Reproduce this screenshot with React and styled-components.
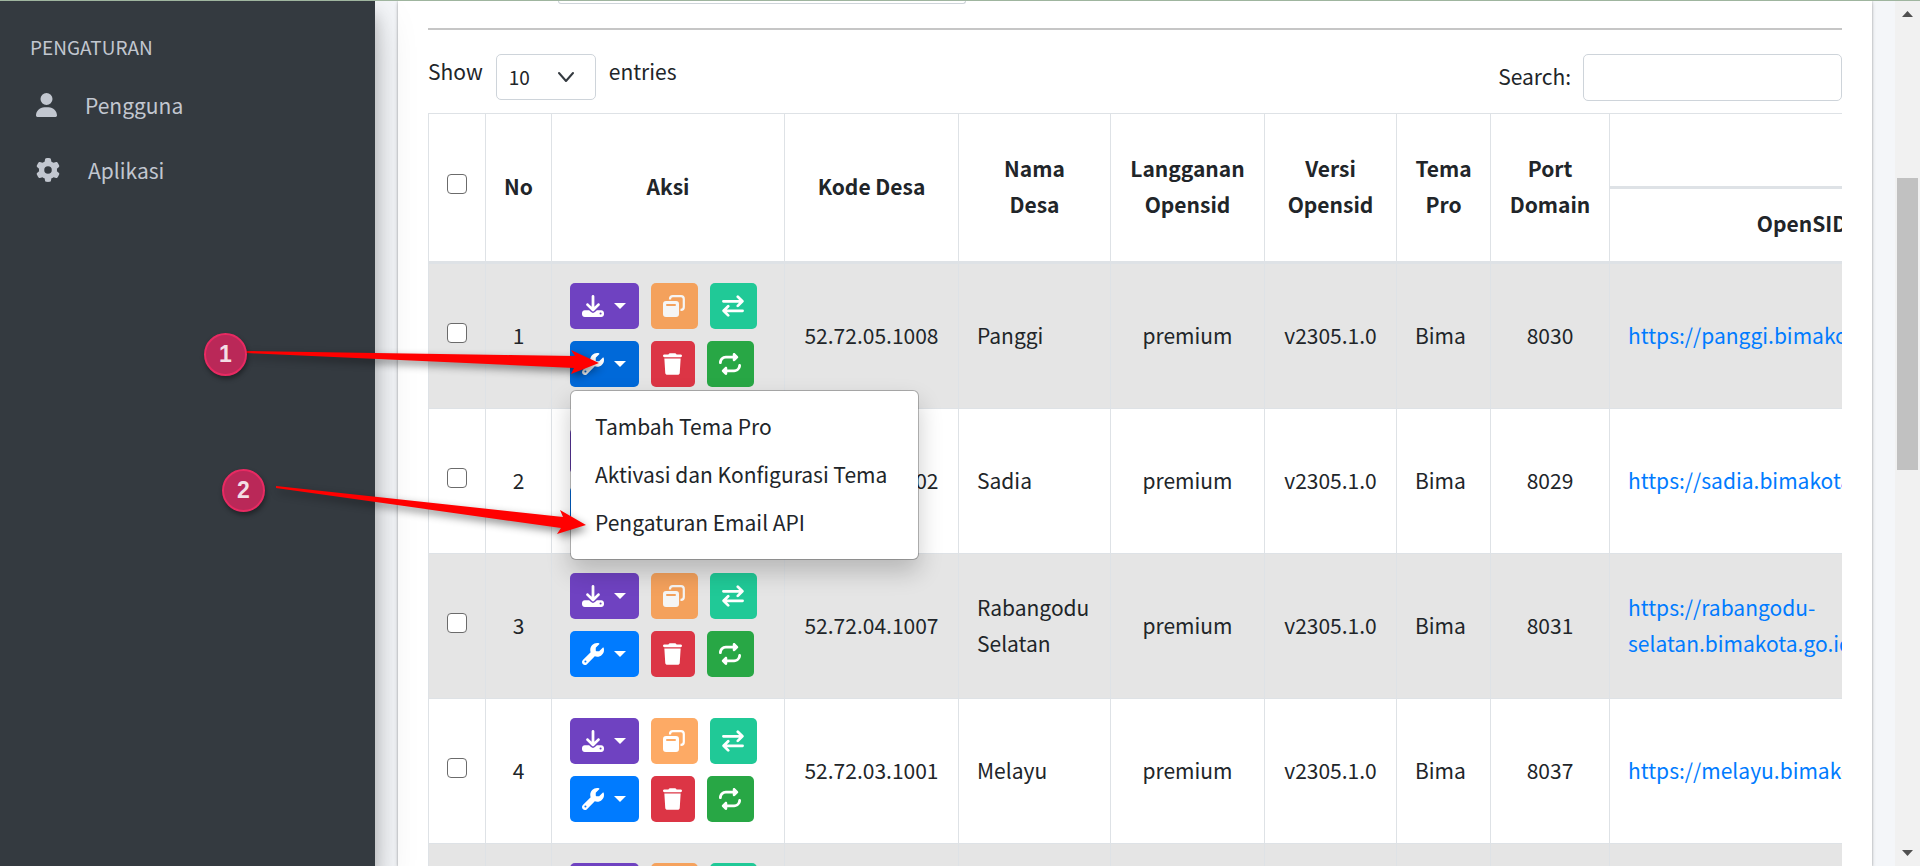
// halaman daftar pelanggan dengan menu pengaturan tema yang terbuka

import React from "react";
import styled, { createGlobalStyle } from "styled-components";
import { FaDownload, FaGear, FaRepeat, FaTrash, FaUser, FaWrench } from "react-icons/fa6";

const GlobalStyle = createGlobalStyle`
  * {
    box-sizing: border-box;
  }

  body {
    margin: 0;
    overflow: hidden;
    background: #f4f6f9;
    color: #212529;
    font-family: "Noto Sans CJK SC", "Open Sans", sans-serif;
    font-size: 21px;
    line-height: 36px;
  }

  button, input, select {
    font-family: inherit;
    color: inherit;
  }
`;

const Page = styled.div`
  position: relative;
  display: flex;
  height: 100vh;
  overflow: hidden;
  border-top: 1px solid #9fb59f;
`;

const Sidebar = styled.aside`
  position: relative;
  z-index: 1;
  flex: 0 0 375px;
  padding: 28px 30px;
  background: #343a40;
  color: #c2c7d0;
  box-shadow: 0 20px 40px rgba(0, 0, 0, 0.18), 0 14px 16px rgba(0, 0, 0, 0.22);
`;

const SidebarTitle = styled.h2`
  margin: 0 0 8px;
  font-size: 19px;
  font-weight: 400;
`;

const SidebarLink = styled.a`
  display: flex;
  align-items: center;
  gap: 28px;
  height: 65px;
  padding: 0 0 2px 6px;
  color: inherit;
  text-decoration: none;

  svg {
    width: ${(props) => props.$iconWidth}px;
    height: 24px;
  }
`;

const Content = styled.main`
  flex: 1;
  min-width: 0;
  padding: 0 23px;
`;

const Card = styled.section`
  height: 100%;
  padding: 0 30px;
  background: #fff;
  box-shadow: 0 0 2px rgba(0, 0, 0, 0.25), 0 2px 4px rgba(0, 0, 0, 0.2);
`;

const FilterBar = styled.div`
  height: 27px;
  padding-left: 130px;
`;

const FilterEdge = styled.div`
  width: 408px;
  height: 3px;
  border: 1px solid #ced4da;
  border-top: 0;
  border-radius: 0 0 6px 6px;
`;

const Divider = styled.hr`
  height: 2px;
  margin: 0 0 24px;
  border: 0;
  background: #c6c6c6;
`;

const Toolbar = styled.div`
  display: flex;
  justify-content: space-between;
  margin-bottom: 12px;
`;

const LengthLabel = styled.label`
  display: flex;
  gap: 13px;
  line-height: 34px;
`;

const SelectBox = styled.span`
  position: relative;
  display: block;

  svg {
    position: absolute;
    top: 17px;
    right: 22px;
    pointer-events: none;
  }
`;

const LengthSelect = styled.select`
  width: 100px;
  height: 46px;
  padding: 0 12px 2px;
  appearance: none;
  border: 1px solid #ced4da;
  border-radius: 5px;
  background: #fff;
  font-size: 19px;
`;

const SearchLabel = styled.label`
  display: flex;
  align-items: center;
  gap: 12px;
`;

const SearchText = styled.span`
  padding-bottom: 4px;
`;

const SearchInput = styled.input`
  width: 259px;
  height: 47px;
  padding: 0 12px;
  border: 1px solid #ced4da;
  border-radius: 5px;
  background: #fff;
  font-size: 19px;
`;

const TableWrapper = styled.div`
  overflow: hidden;
`;

const Table = styled.table`
  width: 1567px;
  table-layout: fixed;
  border-collapse: separate;
  border-spacing: 0;
  border: 1px solid #dee2e6;
  border-width: 1px 0 0 1px;
`;

const HeadCell = styled.th`
  height: 75px;
  padding: 0 12px 4px;
  border-right: 1px solid #dee2e6;
  border-bottom: 3px solid #dee2e6;
  font-weight: 700;
  white-space: pre-line;
`;

const Row = styled.tr`
  background: ${(props) => (props.$striped ? "#e5e5e5" : "#fff")};
`;

const Cell = styled.td`
  height: 145px;
  padding: 0 18px 2px;
  border-right: 1px solid #dee2e6;
  border-bottom: 1px solid #dee2e6;
  text-align: ${(props) => (props.$center ? "center" : "left")};
`;

const Checkbox = styled.input`
  display: block;
  width: 20px;
  height: 20px;
  margin: 0 auto 4px;
  appearance: none;
  border: 1px solid #6b6b6b;
  border-radius: 4px;
  background: #fff;
`;

const DomainLink = styled.a`
  color: #007bff;
  text-decoration: none;
`;

const Actions = styled.div`
  display: grid;
  gap: 12px;
`;

const ActionLine = styled.div`
  display: flex;
  gap: 12px;
`;

const ActionButton = styled.button`
  display: flex;
  align-items: center;
  gap: 10px;
  height: 46px;
  padding: 0 13px 0 12px;
  border: 0;
  border-radius: 5px;
  background: ${(props) => props.$color};
  color: #fff;

  svg {
    width: ${(props) => props.$iconWidth || 22}px;
    height: 22px;
  }

  &:disabled {
    opacity: 0.65;
  }
`;

const Caret = styled.span`
  border: 6px solid transparent;
  border-top-color: currentColor;
  border-bottom: 0;
`;

const Dropdown = styled.div`
  position: relative;
`;

const Menu = styled.div`
  position: absolute;
  z-index: 10;
  top: calc(100% + 3px);
  left: 0;
  min-width: 349px;
  padding: 11px 0 13px;
  border: 1px solid rgba(0, 0, 0, 0.25);
  border-radius: 6px;
  background: #fff;
  background-clip: padding-box;
  box-shadow: 0 12px 24px rgba(0, 0, 0, 0.2);
`;

const MenuItem = styled.a`
  display: block;
  padding: 6px 24px;
  color: #212529;
  text-decoration: none;
  white-space: nowrap;
`;

const Scrollbar = styled.div`
  display: flex;
  flex: 0 0 25px;
  flex-direction: column;
  align-items: center;
  padding: 10px 2px;
  background: #f1f1f1;
`;

const ScrollThumb = styled.div`
  width: 21px;
  height: 292px;
  margin: 161px 0 auto;
  background: #c1c1c1;
`;

const Annotations = styled.svg`
  position: absolute;
  z-index: 20;
  top: -1px;
  left: 0;
  pointer-events: none;
`;

const Arrows = styled.g`
  fill: #ff0000;
  filter: drop-shadow(2px 4px 4px rgba(0, 0, 0, 0.45));
`;

const Marker = styled.span`
  position: absolute;
  z-index: 21;
  top: ${(props) => props.$top}px;
  left: ${(props) => props.$left}px;
  width: 43px;
  height: 43px;
  border: 2px solid #e82a62;
  border-radius: 50%;
  background: #ba2858;
  box-shadow: 1px 3px 5px rgba(0, 0, 0, 0.4);
  color: #f3dde5;
  font-family: "Liberation Sans", sans-serif;
  font-size: 23px;
  font-weight: 700;
  line-height: 38px;
  text-align: center;
`;

const columns = [57, 66, 233, 174, 152, 154, 132, 94, 119, 385];

const headings = [
  "No",
  "Aksi",
  "Kode Desa",
  "Nama\nDesa",
  "Langganan\nOpensid",
  "Versi\nOpensid",
  "Tema\nPro",
  "Port\nDomain",
];

const villages = [
  { kode: "52.72.05.1008", nama: "Panggi", port: "8030", url: "https://panggi.bimakota.go.id" },
  { kode: "52.72.05.1002", nama: "Sadia", port: "8029", url: "https://sadia.bimakota.go.id" },
  { kode: "52.72.04.1007", nama: "Rabangodu Selatan", port: "8031", url: "https://rabangodu-selatan.bimakota.go.id" },
  { kode: "52.72.03.1001", nama: "Melayu", port: "8037", url: "https://melayu.bimakota.go.id" },
  { kode: "", nama: "", port: "", url: "" },
];

const CopyIcon = () => (
  <svg viewBox="0 0 22 22" fill="currentColor">
    <path
      fillRule="evenodd"
      d="M3 6H13Q16 6 16 9V19Q16 22 13 22H3Q0 22 0 19V9Q0 6 3 6ZM4 9Q3 9 3 10Q3 11 4 11H12Q13 11 13 10Q13 9 12 9Z"
    />
    <path
      d="M7 4.5V4Q7 1.2 9.8 1.2H18Q20.8 1.2 20.8 4V12Q20.8 14.8 18 14.8H17.5"
      fill="none"
      stroke="currentColor"
      strokeWidth="2.2"
    />
  </svg>
);

const SwapIcon = () => (
  <svg
    viewBox="0 0 22 22"
    fill="none"
    stroke="currentColor"
    strokeWidth="2.7"
    strokeLinecap="round"
    strokeLinejoin="round"
  >
    <path d="M1.4 6.3H20.4M15.8 1.7L20.4 6.3L15.8 10.9" />
    <path d="M20.6 15.8H1.6M6.2 11.2L1.6 15.8L6.2 20.4" />
  </svg>
);

const ThemeMenu = () => {
  return (
    <Menu>
      <MenuItem href="#tambah">Tambah Tema Pro</MenuItem>
      <MenuItem href="#aktivasi">Aktivasi dan Konfigurasi Tema</MenuItem>
      <MenuItem href="#email">Pengaturan Email API</MenuItem>
    </Menu>
  );
};

// dua baris tombol aksi, menu hanya tampil pada baris yang sedang dibuka
const RowActions = (props) => {
  return (
    <Actions>
      <ActionLine>
        <ActionButton $color="#6f42c1" aria-label="Unduh">
          <FaDownload />
          <Caret />
        </ActionButton>
        <ActionButton $color="#fd7e14" aria-label="Salin" disabled>
          <CopyIcon />
        </ActionButton>
        <ActionButton $color="#20c997" aria-label="Pindah">
          <SwapIcon />
        </ActionButton>
      </ActionLine>
      <ActionLine>
        <Dropdown>
          <ActionButton
            $color={props.open ? "#0069d9" : "#007bff"}
            aria-label="Pengaturan"
            aria-expanded={props.open}
          >
            <FaWrench />
            <Caret />
          </ActionButton>
          {props.open && <ThemeMenu />}
        </Dropdown>
        <ActionButton $color="#dc3545" $iconWidth={19} aria-label="Hapus">
          <FaTrash />
        </ActionButton>
        <ActionButton $color="#28a745" aria-label="Perbarui">
          <FaRepeat />
        </ActionButton>
      </ActionLine>
    </Actions>
  );
};

const VillageRow = (props) => {
  const { village, number } = props;
  return (
    <Row $striped={number % 2 === 1}>
      <Cell>
        <Checkbox type="checkbox" aria-label={`Pilih ${number}`} />
      </Cell>
      <Cell $center>{village.kode && number}</Cell>
      <Cell>
        <RowActions open={number === 1} />
      </Cell>
      <Cell $center>{village.kode}</Cell>
      <Cell>{village.nama}</Cell>
      <Cell $center>{village.kode && "premium"}</Cell>
      <Cell $center>{village.kode && "v2305.1.0"}</Cell>
      <Cell>{village.kode && "Bima"}</Cell>
      <Cell $center>{village.port}</Cell>
      <Cell>
        {village.url && <DomainLink href={village.url}>{village.url}</DomainLink>}
      </Cell>
    </Row>
  );
};

const ScrollArrow = (props) => (
  <svg width="11" height="6" viewBox="0 0 11 6">
    <path d={props.up ? "M0 6L5.5 0L11 6Z" : "M0 0L5.5 6L11 0Z"} fill="#505050" />
  </svg>
);

const App = () => {
  return (
    <>
      <GlobalStyle />
      <Page>
        <Sidebar>
          <SidebarTitle>PENGATURAN</SidebarTitle>
          <nav>
            <SidebarLink href="#pengguna" $iconWidth={21}>
              <FaUser />
              Pengguna
            </SidebarLink>
            <SidebarLink href="#aplikasi" $iconWidth={24}>
              <FaGear />
              Aplikasi
            </SidebarLink>
          </nav>
        </Sidebar>

        <Content>
          <Card>
            <FilterBar>
              <FilterEdge />
            </FilterBar>
            <Divider />
            <Toolbar>
              <LengthLabel>
                Show
                <SelectBox>
                  <LengthSelect defaultValue="10">
                    <option value="10">10</option>
                    <option value="25">25</option>
                    <option value="50">50</option>
                  </LengthSelect>
                  <svg width="16" height="12" viewBox="0 0 16 12">
                    <path
                      d="M1 2L8 10L15 2"
                      fill="none"
                      stroke="#343a40"
                      strokeWidth="2"
                      strokeLinecap="round"
                      strokeLinejoin="round"
                    />
                  </svg>
                </SelectBox>
                entries
              </LengthLabel>
              <SearchLabel>
                <SearchText>Search:</SearchText>
                <SearchInput type="search" />
              </SearchLabel>
            </Toolbar>

            <TableWrapper>
              <Table>
                <colgroup>
                  {columns.map((width, index) => (
                    <col key={index} width={width} />
                  ))}
                </colgroup>
                <thead>
                  <tr>
                    <HeadCell rowSpan={2}>
                      <Checkbox type="checkbox" aria-label="Pilih semua" />
                    </HeadCell>
                    {headings.map((heading) => (
                      <HeadCell key={heading} rowSpan={2}>
                        {heading}
                      </HeadCell>
                    ))}
                    <HeadCell />
                  </tr>
                  <tr>
                    <HeadCell>OpenSID</HeadCell>
                  </tr>
                </thead>
                <tbody>
                  {villages.map((village, index) => (
                    <VillageRow key={index} village={village} number={index + 1} />
                  ))}
                </tbody>
              </Table>
            </TableWrapper>
          </Card>
        </Content>

        <Scrollbar>
          <ScrollArrow up />
          <ScrollThumb />
          <ScrollArrow />
        </Scrollbar>

        <Annotations width="640" height="600" viewBox="0 0 640 600">
          <Arrows>
            <path d="M246 351L575 356L571 350L599 363L571 374L574 368L246 353Z" />
            <path d="M276 486L563 517L560 510L586 525L557 534L561 528L276 488Z" />
          </Arrows>
        </Annotations>
        <Marker $top={332} $left={204}>1</Marker>
        <Marker $top={468} $left={222}>2</Marker>
      </Page>
    </>
  );
};

export default App;
